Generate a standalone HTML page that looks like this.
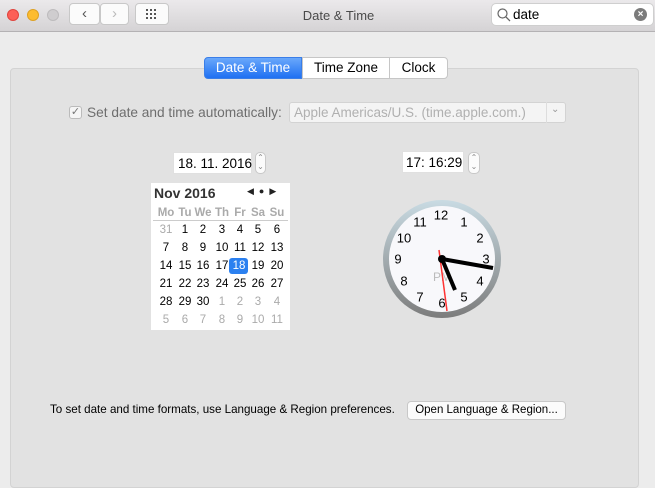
<!DOCTYPE html><html><head><style>
*{margin:0;padding:0;box-sizing:border-box}
body{width:655px;height:476px;overflow:hidden;background:#ececec;font-family:"Liberation Sans",sans-serif;font-size:13px;color:#000;position:relative}
.a{position:absolute;white-space:nowrap}
.tb{left:0;top:0;width:655px;height:32px;background:linear-gradient(#ebe9eb,#d5d3d5);border-bottom:1px solid #b4b2b4}
.dot{width:12px;height:12px;border-radius:50%;top:9px}
.btn{background:#fbfbfb;border:1px solid #c8c8c8;border-radius:4px}
.panel{left:10px;top:68px;width:629px;height:420px;background:#e2e2e2;border:1px solid #d3d3d3;border-radius:4px}
.tab{top:57px;height:22px;line-height:20px;text-align:center;font-size:13.5px;background:#fff;border:1px solid #c6c6c6}
.cal{left:151px;top:183px;width:139px;height:147px;background:#fff}
.cal span{position:absolute;width:20px;text-align:center;font-size:11.5px}
.g{color:#aaa}
</style></head><body>
<div class="a tb"></div>
<div class="a dot" style="left:7px;background:#fc5f57;border:1px solid #e0443e"></div>
<div class="a dot" style="left:27px;background:#fdbc2e;border:1px solid #dea123"></div>
<div class="a dot" style="left:47px;background:#cfcdcf;border:1px solid #bdbbbd"></div>
<div class="a btn" style="left:69px;top:3px;width:31px;height:22px;font-size:15px;color:#555;text-align:center;line-height:20px">&#8249;</div>
<div class="a btn" style="left:100px;top:3px;width:29px;height:22px;font-size:15px;color:#bbb;text-align:center;line-height:20px">&#8250;</div>
<div class="a btn" style="left:135px;top:3px;width:34px;height:22px"></div>
<svg class="a" style="left:145px;top:9px" width="14" height="10"><g fill="#555"><rect x="1" y="0" width="2" height="2"/><rect x="5" y="0" width="2" height="2"/><rect x="9" y="0" width="2" height="2"/><rect x="1" y="4" width="2" height="2"/><rect x="5" y="4" width="2" height="2"/><rect x="9" y="4" width="2" height="2"/><rect x="1" y="8" width="2" height="2"/><rect x="5" y="8" width="2" height="2"/><rect x="9" y="8" width="2" height="2"/></g></svg>
<div class="a" style="left:0;width:655px;top:8px;text-align:center;font-size:13px;color:#4a4a4a;padding-left:22px">Date &amp; Time</div>
<div class="a" style="left:491px;top:3px;width:163px;height:23px;background:#fff;border:1px solid #cfcfcf;border-radius:5px"></div>
<svg class="a" style="left:496px;top:7px" width="16" height="16"><circle cx="6.5" cy="6.5" r="4.5" fill="none" stroke="#666" stroke-width="1.2"/><line x1="10" y1="10" x2="14" y2="14" stroke="#666" stroke-width="1.3"/></svg>
<div class="a" style="left:513px;top:7px;font-size:13.5px">date</div>
<div class="a" style="left:634px;top:8px;width:13px;height:13px;border-radius:50%;background:#7b7b7b;color:#fff;font-size:10px;line-height:13px;text-align:center;font-weight:bold">×</div>

<div class="a panel"></div>
<div class="a tab" style="left:204px;width:98px;background:linear-gradient(#6aa8fb,#1f70f2);color:#fff;border-color:#3a7ee8;border-radius:4px 0 0 4px">Date &amp; Time</div>
<div class="a tab" style="left:302px;width:88px">Time Zone</div>
<div class="a tab" style="left:389px;width:59px;border-radius:0 4px 4px 0">Clock</div>

<div class="a" style="left:69px;top:106px;width:13px;height:13px;border:1px solid #bbb;border-radius:3px;background:#f5f5f5;font-size:11px;line-height:11px;text-align:center;color:#777">✓</div>
<div class="a" style="left:87px;top:105px;font-size:13.7px;color:#6e6e6e">Set date and time automatically:</div>
<div class="a" style="left:289px;top:102px;width:277px;height:21px;background:#f4f4f4;border:1px solid #d3d3d3;border-radius:3px"></div>
<div class="a" style="left:546px;top:102px;width:1px;height:21px;background:#ddd"></div>
<div class="a" style="left:294px;top:105px;font-size:13.5px;color:#b0b0b0">Apple Americas/U.S. (time.apple.com.)</div>
<div class="a" style="left:551px;top:104px;font-size:10px;color:#999">&#8964;</div>

<div class="a" style="left:173px;top:152px;width:79px;height:22px;background:#fff;border:1px solid #e0e0e0;font-size:13.5px;line-height:21px;padding-left:4px">18. 11. 2016</div>
<div class="a btn" style="left:255px;top:152px;width:11px;height:22px;font-size:8px;color:#888;text-align:center;line-height:9px;border-radius:5px">⌃<br>⌄</div>
<div class="a" style="left:402px;top:151px;width:62px;height:22px;background:#fff;border:1px solid #e0e0e0;font-size:13.5px;line-height:21px;padding-left:3px">17: 16:29</div>
<div class="a btn" style="left:468px;top:152px;width:12px;height:22px;font-size:8px;color:#888;text-align:center;line-height:9px;border-radius:5px">⌃<br>⌄</div>

<div class="a cal">
<div class="a" style="left:3px;top:2px;font-weight:bold;font-size:14px;color:#333">Nov 2016</div>
<div class="a" style="left:96px;top:3px;font-size:9px;color:#222">◀ &nbsp;● &nbsp;▶</div>
<div class="a" style="left:2px;top:37px;width:135px;height:1px;background:#ccc"></div>
<div class="a" style="left:78px;top:75px;width:19px;height:16px;background:#2b80f0;border-radius:3px"></div>
<div style="position:absolute;left:0;top:24px;width:139px">
<span class="g" style="left:5px;font-weight:bold">Mo</span><span class="g" style="left:24px;font-weight:bold">Tu</span><span class="g" style="left:42px;font-weight:bold">We</span><span class="g" style="left:61px;font-weight:bold">Th</span><span class="g" style="left:79px;font-weight:bold">Fr</span><span class="g" style="left:97px;font-weight:bold">Sa</span><span class="g" style="left:116px;font-weight:bold">Su</span>
</div>
<div style="position:absolute;left:0;top:41px"><span class="g" style="left:5px">31</span><span style="left:24px">1</span><span style="left:42px">2</span><span style="left:61px">3</span><span style="left:79px">4</span><span style="left:97px">5</span><span style="left:116px">6</span></div>
<div style="position:absolute;left:0;top:59px"><span style="left:5px">7</span><span style="left:24px">8</span><span style="left:42px">9</span><span style="left:61px">10</span><span style="left:79px">11</span><span style="left:97px">12</span><span style="left:116px">13</span></div>
<div style="position:absolute;left:0;top:77px"><span style="left:5px">14</span><span style="left:24px">15</span><span style="left:42px">16</span><span style="left:61px">17</span><span style="left:78px;color:#fff">18</span><span style="left:97px">19</span><span style="left:116px">20</span></div>
<div style="position:absolute;left:0;top:95px"><span style="left:5px">21</span><span style="left:24px">22</span><span style="left:42px">23</span><span style="left:61px">24</span><span style="left:79px">25</span><span style="left:97px">26</span><span style="left:116px">27</span></div>
<div style="position:absolute;left:0;top:113px"><span style="left:5px">28</span><span style="left:24px">29</span><span style="left:42px">30</span><span class="g" style="left:61px">1</span><span class="g" style="left:79px">2</span><span class="g" style="left:97px">3</span><span class="g" style="left:116px">4</span></div>
<div style="position:absolute;left:0;top:131px"><span class="g" style="left:5px">5</span><span class="g" style="left:24px">6</span><span class="g" style="left:42px">7</span><span class="g" style="left:61px">8</span><span class="g" style="left:79px">9</span><span class="g" style="left:97px">10</span><span class="g" style="left:116px">11</span></div>
</div>

<svg class="a" style="left:380px;top:197px" width="124" height="124" font-family="Liberation Sans" font-size="13">
<defs><linearGradient id="r" x1="0" y1="0" x2="0" y2="1"><stop offset="0" stop-color="#c9dbe3"/><stop offset="1" stop-color="#7c7c7c"/></linearGradient></defs>
<circle cx="62" cy="62" r="59" fill="url(#r)"/>
<circle cx="62" cy="62" r="53" fill="#f8f8fb"/>
<g text-anchor="middle" dominant-baseline="central">
<text x="61" y="18">12</text><text x="84" y="25">1</text><text x="100" y="41">2</text><text x="106" y="62">3</text><text x="100" y="84">4</text><text x="84" y="100">5</text><text x="62" y="106">6</text><text x="40" y="100">7</text><text x="24" y="84">8</text><text x="18" y="62">9</text><text x="24" y="41">10</text><text x="40" y="25">11</text>
<text x="62" y="80" fill="#bbb" font-size="12">PM</text></g>
<line x1="62" y1="62" x2="113" y2="71" stroke="#000" stroke-width="4"/>
<line x1="62" y1="62" x2="75" y2="93" stroke="#000" stroke-width="4"/>
<line x1="59" y1="53" x2="67" y2="114" stroke="#f33" stroke-width="1.5"/>
<circle cx="62" cy="62" r="4" fill="#000"/>
</svg>

<div class="a" style="left:50px;top:403px;font-size:11.6px">To set date and time formats, use Language &amp; Region preferences.</div>
<div class="a btn" style="left:407px;top:401px;width:159px;height:19px;font-size:11.5px;text-align:center;line-height:17px">Open Language &amp; Region...</div>
</body></html>
